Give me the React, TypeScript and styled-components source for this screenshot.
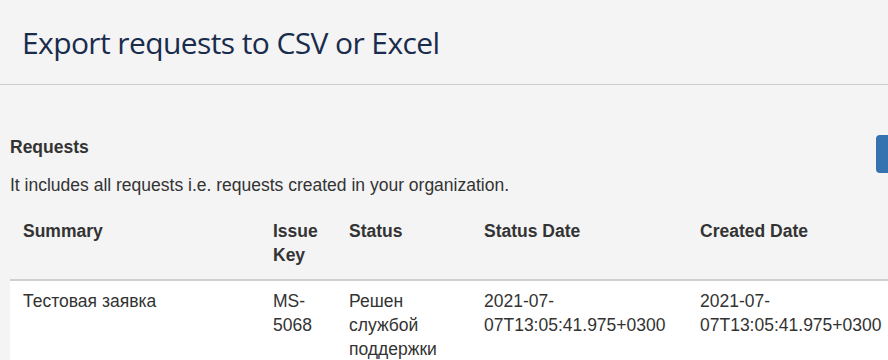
import React from "react";
import styled, { createGlobalStyle } from "styled-components";

const Global = createGlobalStyle`
  html, body { margin: 0; padding: 0; background: #f4f4f4; overflow: hidden; }
  body { font-family: "Liberation Sans", Arial, sans-serif; font-size: 17.5px; color: #333; }
`;

const Page = styled.div`
  width: 990px;
  background: #f4f4f4;
`;

const Header = styled.header`
  height: 85px;
  box-sizing: border-box;
  border-bottom: 1px solid #cccccc;
  display: flex;
  align-items: center;
  padding-left: 22px;
`;

const Title = styled.h1`
  margin: 0;
  font-family: "Open Sans", "Noto Sans", sans-serif;
  font-weight: 500;
  font-size: 30px;
  color: #1a2c4d;
  letter-spacing: -0.6px;
`;

const Main = styled.main`
  padding: 50px 10px 0 10px;
`;

const SectionHead = styled.div`
  display: flex;
  align-items: flex-start;
  justify-content: space-between;
`;

const SectionTitle = styled.h2`
  margin: 0;
  font-size: 17.5px;
  font-weight: 700;
  line-height: 24px;
`;

const Button = styled.button`
  width: 104px;
  height: 38px;
  padding: 0 0 0 24px;
  border: none;
  border-radius: 4px;
  background: #3572b0;
  color: #fff;
  font-family: inherit;
  font-size: 14px;
`;

const Desc = styled.p`
  margin: 0;
  line-height: 24px;
`;

const Table = styled.table`
  margin-top: 14px;
  width: 940px;
  border-collapse: collapse;
  table-layout: fixed;
`;

const Th = styled.th<{ $w: number }>`
  box-sizing: border-box;
  width: ${(p) => p.$w}px;
  text-align: left;
  vertical-align: top;
  font-weight: 700;
  line-height: 24px;
  padding: 8px 13px 12px 13px;
  border-bottom: 2px solid #cfcfcf;
`;

const BodyRow = styled.tr`
  background: #ffffff;
`;

const Td = styled.td`
  vertical-align: top;
  line-height: 24px;
  padding: 8px 13px;
  overflow-wrap: break-word;
`;

const cols = [
  { label: "Summary", w: 250 },
  { label: "Issue Key", w: 76 },
  { label: "Status", w: 135 },
  { label: "Status Date", w: 216 },
  { label: "Created Date", w: 263 },
];

export default function App() {
  return (
    <Page>
      <Global />
      <Header>
        <Title>Export requests to CSV or Excel</Title>
      </Header>
      <Main>
        <SectionHead>
          <SectionTitle>Requests</SectionTitle>
          <Button>Export</Button>
        </SectionHead>
        <Desc>It includes all requests i.e. requests created in your organization.</Desc>
        <Table>
          <thead>
            <tr>
              {cols.map((c) => (
                <Th key={c.label} $w={c.w}>
                  {c.label}
                </Th>
              ))}
            </tr>
          </thead>
          <tbody>
            <BodyRow>
              <Td>Тестовая заявка</Td>
              <Td>MS-5068</Td>
              <Td>Решен службой поддержки</Td>
              <Td>2021-07-07T13:05:41.975+0300</Td>
              <Td>2021-07-07T13:05:41.975+0300</Td>
            </BodyRow>
          </tbody>
        </Table>
      </Main>
    </Page>
  );
}
